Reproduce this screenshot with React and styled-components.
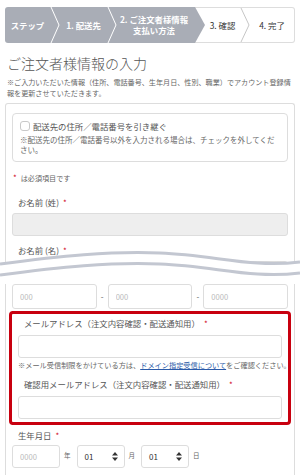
import React from "react"
import styled, { createGlobalStyle } from "styled-components"

const GlobalStyle = createGlobalStyle`
    html, body {
        margin: 0;
        padding: 0;
        background: #fff;
    }
    body {
        height: 475px;
        overflow: hidden;
        font-family: "Noto Sans CJK JP", "Noto Sans", sans-serif;
        color: #555;
    }
    * {
        box-sizing: border-box;
    }
`

const Chevron = ({ color }) => (
    <ChevronSvg viewBox="0 0 10 36" preserveAspectRatio="none">
        <polyline points="1,0 9,18 1,36" fill="none" stroke={color} strokeWidth="1" />
    </ChevronSvg>
)

const SortIcon = () => (
    <svg width="6" height="9" viewBox="0 0 6 9">
        <path d="M3 0 L6 3.5 L0 3.5 Z M0 5.5 L6 5.5 L3 9 Z" fill="#333" />
    </svg>
)

const Label = ({ children }) => (
    <FieldLabel>
        {children}
        <Req>*</Req>
    </FieldLabel>
)

const App = () => (
    <Page>
        <GlobalStyle />
        <StepBar>
            <StepTrack>
                <Step $w={45} $done>ステップ</Step>
                <Chevron color="#fff" />
                <Step $w={47} $done>1. 配送先</Step>
                <Chevron color="#fff" />
                <Step $w={74} $done>2. ご注文者様情報<br />支払い方法</Step>
            </StepTrack>
            <StepTail>
                <Step $w={35}>3. 確認</Step>
                <Chevron color="#c4c4c4" />
                <Step $grow>4. 完了</Step>
            </StepTail>
        </StepBar>

        <Title>ご注文者様情報の入力</Title>
        <Lead>※ご入力いただいた情報（住所、電話番号、生年月日、性別、職業）でアカウント登録情報を更新させていただきます。</Lead>

        <Card>
            <CarryOver>
                <CheckRow>
                    <CheckBox />
                    <span>配送先の住所／電話番号を引き継ぐ</span>
                </CheckRow>
                <CarryNote>※配送先の住所／電話番号以外を入力される場合は、チェックを外してください。</CarryNote>
            </CarryOver>

            <Required><Req $lead>*</Req>は必須項目です</Required>

            <Field $gap={13}>
                <Label>お名前 (姓)</Label>
                <TextInput $filled />
            </Field>
            <Field $gap={8}>
                <Label>お名前 (名)</Label>
                <TextInput $filled />
            </Field>

            <Break>
                <WaveSvg viewBox="0 0 300 36" preserveAspectRatio="none">
                    <path d="M0,16 C60,8 110,3 160,5 C215,7 250,20 300,14 L300,36 L0,36 Z" fill="#fff" />
                    <path d="M0,16 C60,8 110,3 160,5 C215,7 250,20 300,14" fill="none" stroke="#c3c7d1" strokeWidth="3" />
                    <path d="M0,27 C60,19 110,14 160,16 C215,18 250,31 300,25" fill="none" stroke="#c3c7d1" strokeWidth="3" />
                </WaveSvg>
            </Break>

            <PhoneRow>
                <TextInput placeholder="000" />
                <Dash>-</Dash>
                <TextInput placeholder="000" />
                <Dash>-</Dash>
                <TextInput placeholder="0000" />
            </PhoneRow>

            <Highlight>
                <Label>メールアドレス（注文内容確認・配送通知用）</Label>
                <TextInput />
                <MailNote>
                    ※メール受信制限をかけている方は、<a href="#/">ドメイン指定受信について</a>をご確認ください。
                </MailNote>
                <Field $gap={8}>
                    <Label>確認用メールアドレス（注文内容確認・配送通知用）</Label>
                    <TextInput />
                </Field>
            </Highlight>

            <Field $gap={4}>
                <Label>生年月日</Label>
                <DateRow>
                    <TextInput $w={48} placeholder="0000" />
                    <Unit>年</Unit>
                    <SelectBox>01<SortIcon /></SelectBox>
                    <Unit>月</Unit>
                    <SelectBox>01<SortIcon /></SelectBox>
                    <Unit>日</Unit>
                </DateRow>
            </Field>
        </Card>
    </Page>
)

const Page = styled.div`
    padding-top: 7px;
`

const StepBar = styled.div`
    display: flex;
    height: 36px;
    margin: 0 5px;
`

const StepTrack = styled.div`
    position: relative;
    z-index: 1;
    display: flex;
    padding-right: 14px;
    background: #a9adb6;
    border-radius: 3px 0 0 3px;
    clip-path: polygon(0 0, calc(100% - 10px) 0, 100% 50%, calc(100% - 10px) 100%, 0 100%);
`

const StepTail = styled.div`
    flex: 1;
    display: flex;
    margin-left: -10px;
    padding-left: 10px;
    background: #fff;
    border: 1px solid #ddd;
    border-left: none;
    border-radius: 0 3px 3px 0;
`

const Step = styled.div`
    display: flex;
    align-items: center;
    justify-content: center;
    width: ${p => (p.$w ? `${p.$w}px` : "auto")};
    flex: ${p => (p.$grow ? 1 : "none")};
    font-size: 8.4px;
    font-weight: ${p => (p.$done ? "bold" : "normal")};
    line-height: 11px;
    text-align: center;
    color: ${p => (p.$done ? "#fff" : "#333")};
`

const ChevronSvg = styled.svg`
    flex: none;
    width: 10px;
    height: 100%;
`

const Title = styled.h1`
    margin: 11px 7px 0;
    font-size: 14px;
    font-weight: 300;
    line-height: 18px;
    color: #555;
`

const Lead = styled.p`
    margin: 5px 9px 0 7px;
    font-size: 7.1px;
    line-height: 11px;
    color: #666;
`

const Card = styled.div`
    position: relative;
    margin: 4px 5px 0;
    padding: 9px 6px 0;
    border: 1px solid #ddd;
    border-bottom: none;
    border-radius: 3px 3px 0 0;
    height: 380px;
`

const CarryOver = styled.div`
    padding: 6px 7px 7px;
    border: 1px solid #ddd;
    border-radius: 4px;
`

const CheckRow = styled.div`
    display: flex;
    align-items: center;
    gap: 3px;
    height: 12px;
    font-size: 8.4px;
    color: #555;
`

const CheckBox = styled.span`
    width: 10px;
    height: 10px;
    border: 1px solid #c9c9c9;
    border-radius: 3px;
    background: #fff;
`

const CarryNote = styled.p`
    margin: 3px 0 0;
    font-size: 7.5px;
    line-height: 9.5px;
    color: #666;
`

const Required = styled.p`
    margin: 11px 0 0;
    font-size: 7.1px;
    line-height: 10px;
    color: #666;
`

const Req = styled.span`
    margin: ${p => (p.$lead ? "0 4px 0 1px" : "0 0 0 4px")};
    color: #d0021b;
    font-size: 8px;
`

const Field = styled.div`
    margin-top: ${p => p.$gap}px;
`

const FieldLabel = styled.div`
    padding-left: 6px;
    margin-bottom: 4px;
    font-size: 8.4px;
    line-height: 12px;
    color: #555;
`

const TextInput = styled.input`
    display: block;
    width: ${p => (p.$w ? `${p.$w}px` : "100%")};
    height: 23px;
    margin: 0;
    padding: 0 7px;
    border: 1px solid #ddd;
    border-radius: 3px;
    background: ${p => (p.$filled ? "#eee" : "#fff")};
    font-family: inherit;
    font-size: 7.6px;
    color: #333;
    outline: none;
    &::placeholder {
        color: #bbb;
    }
`

const Break = styled.div`
    position: relative;
    height: 0;
`

const WaveSvg = styled.svg`
    position: absolute;
    left: -12px;
    bottom: 0;
    width: 300px;
    height: 36px;
`

const PhoneRow = styled.div`
    display: grid;
    grid-template-columns: 1fr 11px 1fr 11px 1fr;
    height: 25px;
    ${TextInput} {
        height: 25px;
    }
`

const Dash = styled.span`
    align-self: center;
    text-align: center;
    font-size: 8px;
    color: #555;
`

const Highlight = styled.div`
    margin: 2px -3px 0;
    padding: 3px 6px 3px;
    border: 3px solid #c8000f;
    border-radius: 4px;
    ${FieldLabel} {
        margin-bottom: 5px;
    }
`

const MailNote = styled.p`
    margin: 2px 0 0;
    font-size: 7.2px;
    line-height: 10px;
    color: #666;
    white-space: nowrap;
    a {
        color: #2b5aa8;
    }
`

const DateRow = styled.div`
    display: flex;
    align-items: center;
    margin-top: -1px;
`

const Unit = styled.span`
    margin: -3px 6px 0 4px;
    font-size: 6.5px;
    color: #666;
`

const SelectBox = styled.div`
    display: flex;
    align-items: center;
    justify-content: space-between;
    width: 48px;
    height: 23px;
    padding: 0 6px 0 7px;
    border: 1px solid #ddd;
    border-radius: 3px;
    font-size: 8px;
    color: #333;
`

export default App
